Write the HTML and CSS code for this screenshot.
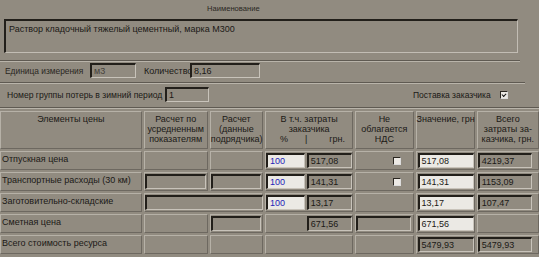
FILE: index.html
```html
<!DOCTYPE html>
<html lang="ru">
<head>
  <meta charset="UTF-8">
  <title>Ресурс</title>
  <link rel="stylesheet" href="styles.css">
</head>
<body>

<div class="caption">Наименование</div>
<div class="namebox">Раствор кладочный тяжелый цементный, марка М300</div>
<div class="sep s1"></div>

<div class="line l1">
  <span class="lbl small">Единица измерения</span>
  <span class="field f-unit">м3</span>
  <span class="lbl qty">Количество</span>
  <span class="field f-qty">8,16</span>
</div>
<div class="sep s2"></div>

<div class="line l2">
  <span class="lbl grp">Номер группы потерь в зимний период</span>
  <span class="field f-grp">1</span>
  <span class="lbl supply">Поставка заказчика</span>
  <span class="check on"></span>
</div>
<div class="sep s3"></div>

<table class="grid">
  <colgroup>
    <col style="width:141px"><col style="width:64px"><col style="width:53px">
    <col style="width:88px"><col style="width:58px"><col style="width:59px"><col style="width:62px">
  </colgroup>
  <tr class="hd">
    <th>Элементы цены</th>
    <th>Расчет по<br>усредненным<br>показателям</th>
    <th>Расчет<br>(данные<br>подрядчика)</th>
    <th>В т.ч. затраты<br>заказчика
      <div class="split"><span>%</span><span class="bar">|</span><span class="uah">грн.</span></div>
    </th>
    <th>Не<br>облагается<br>НДС</th>
    <th>Значение, грн</th>
    <th>Всего<br>затраты за-<br>казчика, грн.</th>
  </tr>
  <tr>
    <td class="name">Отпускная цена</td>
    <td></td>
    <td></td>
    <td><div class="pair"><span class="field pct">100</span><span class="field sum">517,08</span></div></td>
    <td class="nds"><span class="check"></span></td>
    <td class="val"><span class="field white">517,08</span></td>
    <td class="tot"><span class="field">4219,37</span></td>
  </tr>
  <tr>
    <td class="name">Транспортные расходы (30 км)</td>
    <td class="calc"><span class="field c2"></span></td>
    <td class="calc"><span class="field c3"></span></td>
    <td><div class="pair"><span class="field pct">100</span><span class="field sum">141,31</span></div></td>
    <td class="nds"><span class="check"></span></td>
    <td class="val"><span class="field white">141,31</span></td>
    <td class="tot"><span class="field">1153,09</span></td>
  </tr>
  <tr>
    <td class="name">Заготовительно-складские</td>
    <td class="calc" colspan="2"><span class="field c23"></span></td>
    <td><div class="pair"><span class="field pct">100</span><span class="field sum">13,17</span></div></td>
    <td></td>
    <td class="val"><span class="field white">13,17</span></td>
    <td class="tot"><span class="field">107,47</span></td>
  </tr>
  <tr>
    <td class="name">Сметная цена</td>
    <td></td>
    <td class="calc"><span class="field c3"></span></td>
    <td><div class="pair"><span class="gap"></span><span class="field sum">671,56</span></div></td>
    <td class="calc"><span class="field c5"></span></td>
    <td class="val"><span class="field white">671,56</span></td>
    <td></td>
  </tr>
  <tr>
    <td class="name">Всего стоимость ресурса</td>
    <td></td>
    <td></td>
    <td></td>
    <td></td>
    <td class="val"><span class="field">5479,93</span></td>
    <td class="tot"><span class="field">5479,93</span></td>
  </tr>
</table>

</body>
</html>
```

FILE: styles.css
```css
body {
  margin: 0;
  background: #918b80;
  font-family: "Liberation Sans", Arial, sans-serif;
  font-size: 9px;
  color: #1b1916;
  width: 539px;
  height: 257px;
  overflow: hidden;
}

.caption { padding: 4px 0 0 207px; height: 15px; font-size: 7.6px; color: #2a2722; }

.namebox {
  margin: 0 21px 0 4px;
  height: 28px;
  padding: 3px 0 0 3px;
  border-top: 2px solid #221f1a;
  border-left: 2px solid #221f1a;
  border-right: 1px solid #c2bdb4;
  border-bottom: 1px solid #c2bdb4;
}

.sep {
  border-top: 1px solid #5f5a52;
  border-bottom: 1px solid #b9b4aa;
}
.s1 { width: 520px; margin-top: 7px; }
.s2 { width: 525px; margin-top: 4px; }
.s3 { width: 539px; margin-top: 5px; }

.line { display: flex; align-items: center; height: 15px; }
.l1 { margin-top: 1px; }
.l2 { margin-top: 3px; }

.lbl { white-space: nowrap; }
.small { font-size: 8.4px; padding-left: 5px; width: 85px; color: #2a2722; }
.qty { padding-left: 8px; width: 46px; }
.grp { padding-left: 7px; width: 158px; font-size: 8.6px; }
.supply { margin-left: 204px; width: 87px; font-size: 8.5px; }

.field {
  display: inline-block;
  box-sizing: border-box;
  height: 15px;
  line-height: 12px;
  padding-left: 2px;
  border-top: 2px solid #221f1a;
  border-left: 2px solid #221f1a;
  border-right: 1px solid #c8c3ba;
  border-bottom: 1px solid #c8c3ba;
  background: #918b80;
  vertical-align: middle;
  white-space: nowrap;
}
.f-unit { width: 46px; color: #46423b; }
.f-qty { width: 70px; }
.f-grp { width: 44px; }

.check {
  display: inline-block;
  box-sizing: border-box;
  width: 8px;
  height: 8px;
  background: #ece9e4;
  border-top: 1px solid #2a2620;
  border-left: 1px solid #2a2620;
  border-right: 1px solid #ddd;
  border-bottom: 1px solid #ddd;
  position: relative;
}
.check.on::after {
  content: "";
  position: absolute;
  left: 1px; top: 1px;
  width: 3px; height: 2px;
  border-left: 1px solid #111;
  border-bottom: 1px solid #111;
  transform: rotate(-45deg);
}

.grid {
  margin: 0 0 0 -2px;
  border-collapse: separate;
  border-spacing: 2px;
  table-layout: fixed;
  width: 543px;
}
.grid th, .grid td {
  box-sizing: border-box;
  padding: 0;
  border-top: 1px solid #b6b1a7;
  border-left: 1px solid #b6b1a7;
  border-right: 1px solid #6d6860;
  border-bottom: 1px solid #6d6860;
  vertical-align: top;
}
.grid th {
  height: 38px;
  font-weight: normal;
  line-height: 10px;
  padding-top: 2px;
  text-align: center;
  white-space: nowrap;
}
.split { display: flex; padding-left: 14px; }
.bar { margin-left: 17px; }
.uah { margin-left: 22px; }

.grid td { height: 19px; }
.grid td.name { padding: 2px 0 0 1px; white-space: nowrap; }
.grid td.calc { padding: 1px 0 0 0; }
.c2 { width: 61px; }
.c3 { width: 50px; }
.c23 { width: 118px; }
.c5 { width: 55px; }

.pair { display: flex; gap: 2px; padding-top: 1px; }
.pct { width: 39px; background: #ebe9e4; color: #2323b8; }
.sum { width: 46px; }
.gap { width: 39px; }

.nds { text-align: right; padding: 5px 12px 0 0 !important; }
.val { padding: 1px 0 0 1px !important; }
.val .field { width: 56px; }
.white { background: #ebe9e4; }
.tot { padding: 1px 0 0 0 !important; }
.tot .field { width: 54px; }
```
